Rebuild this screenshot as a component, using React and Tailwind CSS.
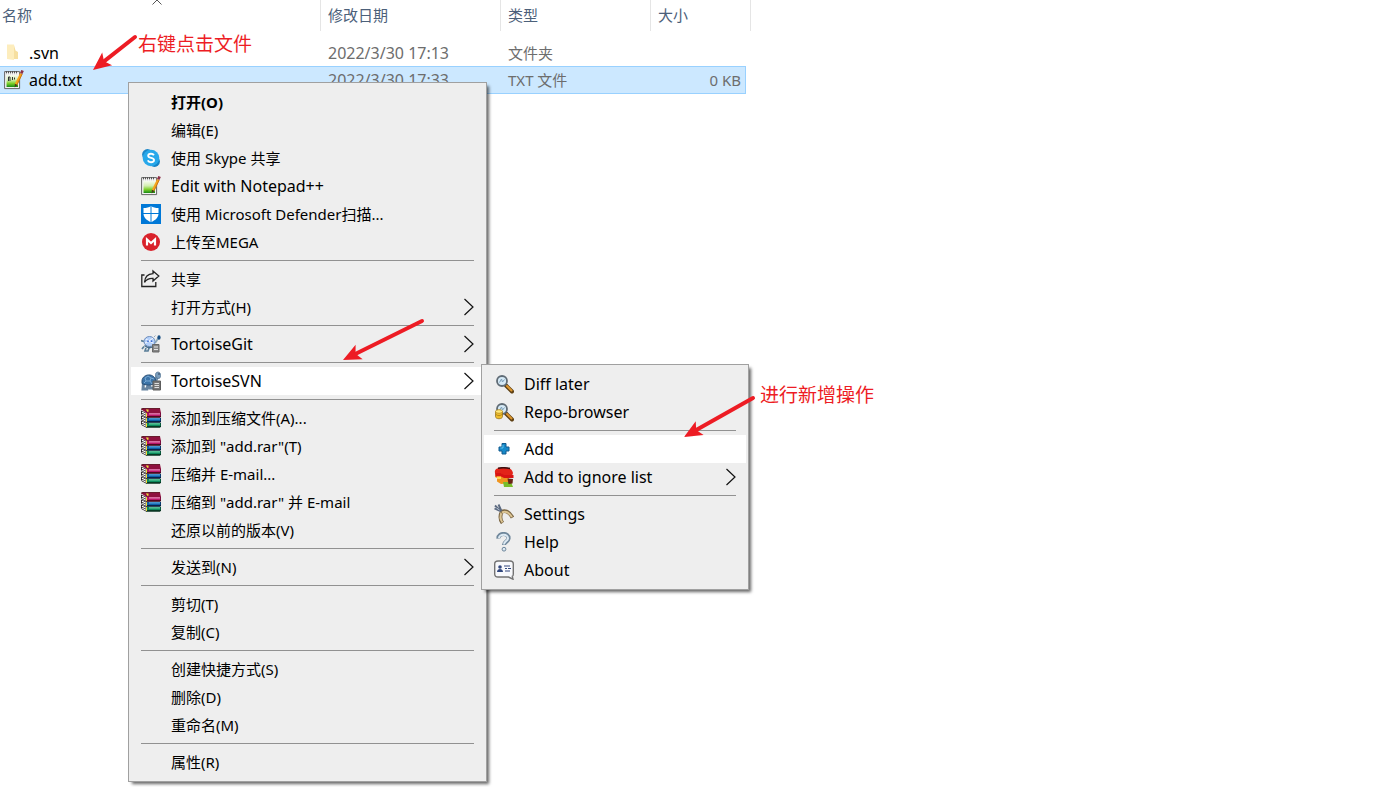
import clsx from "clsx";

const SkypeIcon = () => (
  <svg viewBox="0 0 20 20" className="size-5">
    <circle cx="6.5" cy="6.5" r="5.4" fill="#1c86c8" />
    <circle cx="13.5" cy="13.5" r="5.4" fill="#1583c6" />
    <circle cx="10" cy="10" r="8.3" fill="#28a8ea" />
    <path
      d="M12.9 7.2C12.3 6.1 11.2 5.7 10 5.7c-1.7 0-2.8.8-2.8 2 0 2.9 5.8 1.5 5.8 4.3 0 1.4-1.3 2.2-3 2.2-1.5 0-2.7-.6-3.2-1.8"
      fill="none"
      stroke="#fff"
      strokeWidth="1.9"
    />
  </svg>
);

const NotepadIcon = ({ marks }) => (
  <svg viewBox="0 0 20 20" className="size-5">
    <defs>
      <linearGradient id="npp" x1="0" y1="0" x2="0" y2="1">
        <stop offset="0" stopColor="#f6fbf0" />
        <stop offset="0.4" stopColor="#d3eeb0" />
        <stop offset="0.7" stopColor="#7fd02c" />
        <stop offset="1" stopColor="#168a16" />
      </linearGradient>
    </defs>
    <path d="M.6 1.600h15v17h-15z" fill="#f4f4f4" stroke="#666" />
    <path d="M2.500 5h11.500v12H2.500z" fill="url(#npp)" />
    <path d="M2 2h11" stroke="#555" strokeWidth="2" strokeDasharray="1 1" />
    <path d="M2 3.700h11" stroke="#aaa" strokeWidth="1" strokeDasharray="1 1" />
    {marks && <path d="M4.500 11V7h1.500v4M8.500 7v3M10.500 7.500v2" stroke="#333" fill="none" />}
    <path d="M17.200 3.500L12 14.500" stroke="#f5a51d" strokeWidth="2.600" />
    <path d="M18.200 4L13.200 14.500" stroke="#c56e12" strokeWidth="0.900" />
    <path d="M18.600 0.500L17.200 3.500" stroke="#8e3048" strokeWidth="2.700" />
    <path d="M10.900 13.800l2.600 1.200-2.800 2.600z" fill="#4c3a1c" />
  </svg>
);

const DefenderIcon = () => (
  <svg viewBox="0 0 20 20" className="size-5">
    <path d="M0 0h20v20H0z" fill="#0078d7" />
    <path d="M10 2c2 1.400 4.500 2 7.500 2v5.500c0 4-3.200 6.800-7.500 8.700-4.300-1.900-7.500-4.700-7.500-8.700V4c3 0 5.500-.6 7.500-2z" fill="#fff" />
    <path d="M10 1v18M2 9.500h16" stroke="#0078d7" strokeWidth="1" />
  </svg>
);

const MegaIcon = () => (
  <svg viewBox="0 0 20 20" className="size-5">
    <circle cx="10" cy="10" r="9" fill="#d9222b" />
    <path d="M6 13.500V7.500l4 3.500 4-3.500v6" fill="none" stroke="#fff" strokeWidth="2.200" />
  </svg>
);

const ShareIcon = () => (
  <svg viewBox="0 0 20 20" className="size-5" fill="none" stroke="#222" strokeWidth="1.300">
    <path d="M3.500 6H.8v11.500h14V13" />
    <path d="M12 2l5.800 5L12 12V9.300c-4-.2-6.500.8-8.500 4 .3-4.800 3.200-8.200 8.500-8.600z" />
  </svg>
);

const TortoiseGitIcon = () => (
  <svg viewBox="0 0 20 20" className="size-5">
    <path d="M0 6.500l3 1M3 12.500L1 15M5 14l-1 3h3l1-3" stroke="#5b7f99" strokeWidth="1.700" fill="none" />
    <path d="M13.500 9c2-.5 2-3 4-5" stroke="#8fa9b8" strokeWidth="1.800" fill="none" />
    <ellipse cx="8.500" cy="7.500" rx="5.500" ry="5" fill="#b4d0fa" stroke="#6c8cba" />
    <path d="M5 5l3 2 4-3M4 9l4-2 4 2" stroke="#f4f9ff" fill="none" />
    <circle cx="7" cy="7.200" r="0.900" fill="#3c6ad0" />
    <circle cx="10.500" cy="7.200" r="0.900" fill="#3c6ad0" />
    <path d="M3.500 11.500c3 2.500 7 2.500 10 0" stroke="#466c8c" strokeWidth="1.600" fill="none" />
    <path d="M13 3l1.500-1.500" stroke="#96aabb" />
    <ellipse cx="18" cy="3.500" rx="1.600" ry="2.200" fill="#174f83" />
    <path d="M11.500 10.500H18v7.500h-6.500z" fill="#858585" stroke="#666" />
    <path d="M13 13h4M13 15.500h4" stroke="#e4e4e4" />
  </svg>
);

const TortoiseSvnIcon = () => (
  <svg viewBox="0 0 20 20" className="size-5">
    <path d="M2.500 12l-.5 6h4l1-4M8 13l1 4h3" stroke="#6784a0" strokeWidth="3" fill="none" />
    <path d="M14 10c2-1 1-4 3-6" stroke="#6e8eac" strokeWidth="3.500" fill="none" />
    <path d="M1 10c0-4 4-6.500 8-6s6.500 4 5.500 8.500c-4 2-10 2-13.500 0z" fill="#3c74a8" stroke="#2b5077" />
    <path d="M4 7l3-2 3 2-1 3H5zM10 7l3 1M5 10l-2 2M9 10l2 3" stroke="#79a9d4" fill="none" />
    <path d="M14.500 3.500c0-3 4.500-3.500 5 0s-1 4-2.500 4-2.500-2-2.500-4z" fill="#7a9dbd" stroke="#4b6b89" strokeWidth="0.700" />
    <circle cx="18" cy="3" r="0.700" fill="#14293e" />
    <path d="M12 10h7.500v9H12z" fill="#777" stroke="#5c5c5c" />
    <path d="M13.500 12.500H18M13.500 14.500H18M13.500 16.500H18" stroke="#dedede" />
  </svg>
);

const Book = ({ y, dark, cover, shine }) => (
  <g transform={`translate(0 ${y})`}>
    <path d="M0 1.200l5.500 2.600v4.700L.8 6Q-.6 3.500 0 1.200z" fill="#1c1518" />
    <path d="M.9 2.300l4 1.900v1.200L.8 3.500zM.8 4.300l4.100 1.900v1.300L1.300 5.400z" fill="#fff" />
    <path d="M5 3.400h15v3.800l-1 1.300H5z" fill={dark} />
    <path d="M6 3.800h13.500v3H6z" fill={cover} />
    <path d="M8 4.600h11" stroke={shine} strokeWidth="1" />
    <path d="M5.500 3.800v4" stroke="#f0de39" strokeWidth="1" />
  </g>
);

const WinRarIcon = () => (
  <svg viewBox="0 0 20 20" className="size-5">
    <Book y={11.3} dark="#07301f" cover="#0a8a5c" shine="#7fe3b8" />
    <Book y={6.3} dark="#061d3d" cover="#0c5da8" shine="#6fc0ef" />
    <Book y={1.3} dark="#430618" cover="#b81468" shine="#f3a7cd" />
    <path d="M0 1.200L3 .2h16L20 5H5.500z" fill="#8e103f" />
    <path d="M0 1.200L3 .2h16" stroke="#4c0a12" fill="none" />
    <path d="M5 2h2.500M6 3.200h1.500" stroke="#f0de39" strokeWidth="1.200" />
  </svg>
);

const Magnifier = () => (
  <g>
    <path d="M12 11.500l6 6" stroke="#5d3f12" strokeWidth="4" strokeLinecap="round" />
    <path d="M13 12l4.500 4.500" stroke="#dc962e" strokeWidth="2" strokeLinecap="round" />
    <circle cx="8" cy="7" r="5" fill="#d5e9f6" stroke="#5f6b75" strokeWidth="1.800" />
    <path d="M5.500 8.500l2-3.500 1 3 2-2.500" stroke="#7c9fb8" fill="none" />
  </g>
);

const DiffIcon = () => (
  <svg viewBox="0 0 20 20" className="size-5">
    <Magnifier />
  </svg>
);

const RepoIcon = () => (
  <svg viewBox="0 0 20 20" className="size-5">
    <Magnifier />
    <path d="M1.500 9.500v5c0 3 7 3 7 0v-5z" fill="#efbd2b" stroke="#98731a" strokeWidth="0.800" />
    <ellipse cx="5" cy="9.500" rx="3.500" ry="1.800" fill="#ffe97b" stroke="#b78c20" strokeWidth="0.800" />
    <path d="M2 12.500c1.500 1.500 4.500 1.500 6 0" stroke="#b68a1b" fill="none" />
  </svg>
);

const AddIcon = () => (
  <svg viewBox="0 0 20 20" className="size-5">
    <path d="M8 4.500h4V8h3v4h-3v3H8v-3H5V8h3z" fill="#1689c9" stroke="#125b8e" strokeLinejoin="round" />
    <path d="M9 6v3H6.500" stroke="#5dc4ed" fill="none" />
  </svg>
);

const IgnoreIcon = () => (
  <svg viewBox="0 0 20 20" className="size-5">
    <path d="M2 6h13v8l-3 2.500-5 .5-4-2.500V11L1 10z" fill="#f0951f" />
    <path d="M9 15h8l2 5H10z" fill="#79bd2a" />
    <path d="M1 6C0 2 4 .5 9 .5S18 1 19 6l-1 3H9L7 6z" fill="#e32419" />
    <path d="M4 1.200q6-1 12 .3" stroke="#3d1010" strokeWidth="1.600" fill="none" />
    <path d="M1 6h6l3 2h9.500v3H10L7 9.500H1.500z" fill="#d81414" />
    <path d="M13.500 11.500l5.500.5-.5 4.500-4 .5z" fill="#6a2416" />
    <path d="M3 9.500h4v2.500H3z" fill="#ffd752" />
  </svg>
);

const SettingsIcon = () => (
  <svg viewBox="0 0 20 20" className="size-5" fill="none">
    <path d="M8 7c-2 4-2.500 8 .5 12" stroke="#7a6543" strokeWidth="3.800" />
    <path d="M8 7.500c-2 4-2 8 .5 10.800" stroke="#dcc594" strokeWidth="2" />
    <path d="M7 8c4-2 8-.5 11.500 5.500" stroke="#7a6543" strokeWidth="3.800" />
    <path d="M8 8.500c4-2 7 0 10 4.500" stroke="#dcc594" strokeWidth="2" />
    <path d="M1 1.500l6 6M4.500.5L7.500 7M.5 4.500L6 7" stroke="#5c6a80" strokeWidth="1.900" />
    <path d="M2.500 4l3 2" stroke="#b8c6d8" />
  </svg>
);

const HelpIcon = () => (
  <svg viewBox="0 0 20 20" className="size-5" fill="none">
    <path d="M4.500 6.500c-.5-6 10.500-6 10 0-.5 3.500-4.500 3-4.500 6.500" stroke="#6f879b" strokeWidth="4.200" />
    <path d="M5 6c0-4.500 9.500-4.500 9 .5-.5 3-4 2.500-4 6" stroke="#dce9f3" strokeWidth="2" />
    <circle cx="10" cy="17.200" r="1.900" fill="#dce9f3" stroke="#6f879b" />
  </svg>
);

const AboutIcon = () => (
  <svg viewBox="0 0 20 20" className="size-5">
    <path
      d="M4 1h12q3.300 0 3.300 3v10q0 2-1 2.300l.7 2.900L14.500 17H4q-3.300 0-3.300-3V4Q.7 1 4 1z"
      fill="#f8f9fc"
      stroke="#737373"
      strokeWidth="1.400"
    />
    <circle cx="6" cy="7" r="1.800" fill="#32487e" />
    <path d="M3 12c0-4 6-4 6 0z" fill="#32487e" />
    <path d="M10 6h6M11 8.500h2M14 8.500h3M11 11h5" stroke="#32487e" strokeWidth="1.200" />
  </svg>
);

const FolderIcon = () => (
  <svg viewBox="0 0 20 20" className="size-5">
    <path d="M8 2h2l1.500 5.500 2.500 1.500v7H8z" fill="#f6dfa0" />
    <path d="M3 1.500h7V17L3 16z" fill="#fdedbd" />
  </svg>
);

const Chevron = () => (
  <svg viewBox="0 0 10 18" className="ml-auto h-[18px] w-[10px]" fill="none">
    <path d="M.5 1l8.500 8-8.500 8" stroke="#111" strokeWidth="1.200" />
  </svg>
);

const svnMenu = [
  [
    { label: "Diff later", icon: <DiffIcon />, latin: true },
    { label: "Repo-browser", icon: <RepoIcon />, latin: true },
  ],
  [
    { label: "Add", icon: <AddIcon />, latin: true, active: true },
    { label: "Add to ignore list", icon: <IgnoreIcon />, latin: true, more: true },
  ],
  [
    { label: "Settings", icon: <SettingsIcon />, latin: true },
    { label: "Help", icon: <HelpIcon />, latin: true },
    { label: "About", icon: <AboutIcon />, latin: true },
  ],
];

const fileMenu = [
  [
    { label: "打开(O)", bold: true },
    { label: "编辑(E)" },
    { label: "使用 Skype 共享", icon: <SkypeIcon /> },
    { label: "Edit with Notepad++", icon: <NotepadIcon />, latin: true },
    { label: "使用 Microsoft Defender扫描...", icon: <DefenderIcon /> },
    { label: "上传至MEGA", icon: <MegaIcon /> },
  ],
  [
    { label: "共享", icon: <ShareIcon /> },
    { label: "打开方式(H)", more: true },
  ],
  [{ label: "TortoiseGit", icon: <TortoiseGitIcon />, latin: true, more: true }],
  [
    {
      label: "TortoiseSVN",
      icon: <TortoiseSvnIcon />,
      latin: true,
      more: true,
      active: true,
      submenu: svnMenu,
    },
  ],
  [
    { label: "添加到压缩文件(A)...", icon: <WinRarIcon /> },
    { label: '添加到 "add.rar"(T)', icon: <WinRarIcon /> },
    { label: "压缩并 E-mail...", icon: <WinRarIcon /> },
    { label: '压缩到 "add.rar" 并 E-mail', icon: <WinRarIcon /> },
    { label: "还原以前的版本(V)" },
  ],
  [{ label: "发送到(N)", more: true }],
  [{ label: "剪切(T)" }, { label: "复制(C)" }],
  [{ label: "创建快捷方式(S)" }, { label: "删除(D)" }, { label: "重命名(M)" }],
  [{ label: "属性(R)" }],
];

const Menu = ({ groups, className }) => (
  <div
    className={clsx(
      "absolute border border-[#a0a0a0] bg-[#eeeeee] px-0.5 py-[5px] shadow-[3px_3px_3px_-1px_rgba(0,0,0,0.6)]",
      className
    )}
  >
    {groups.map((group, index) => (
      <div key={index}>
        {index > 0 && <hr className="mx-2.5 my-1 border-[#919191]" />}
        <ul>
          {group.map((item) => (
            <li key={item.label} className="relative">
              <button
                type="button"
                className={clsx(
                  "flex h-7 w-full items-center gap-2.5 px-2.5 text-left",
                  item.active && "bg-white",
                  item.bold && "font-bold",
                  item.latin && "text-[16px]"
                )}
              >
                <span className="size-5 shrink-0">{item.icon}</span>
                <span className="whitespace-nowrap leading-5">{item.label}</span>
                {item.more && <Chevron />}
              </button>
              {item.submenu && (
                <Menu groups={item.submenu} className="-top-[3px] left-full z-10 -ml-[3px] w-[268px]" />
              )}
            </li>
          ))}
        </ul>
      </div>
    ))}
  </div>
);

// Arrow head sits at (x, y), the tail at (fromX, fromY)
const Arrow = ({ x, y, fromX, fromY }) => {
  const length = Math.hypot(fromX - x, fromY - y);
  const angle = (Math.atan2(fromY - y, fromX - x) * 180) / Math.PI;
  return (
    <g transform={`translate(${x} ${y}) rotate(${angle})`} fill="#ed1c24">
      <path d="M0 0L18 -8L14 0L18 8z" />
      <path d={`M12 0H${length}`} stroke="#ed1c24" strokeWidth="4" strokeLinecap="round" />
    </g>
  );
};

const App = () => {
  return (
    <div className="relative min-h-screen overflow-hidden bg-white font-['Noto_Sans','Noto_Sans_CJK_SC',sans-serif] text-[15px] leading-5 text-black">
      {/* File list */}
      <table className="table-fixed border-separate border-spacing-0 whitespace-nowrap text-left text-[#6d6d6d]">
        <colgroup>
          <col className="w-[321px]" />
          <col className="w-[180px]" />
          <col className="w-[150px]" />
          <col className="w-[95px]" />
          <col className="w-[5px]" />
        </colgroup>
        <thead className="text-[#4c607a]">
          <tr className="h-[31px]">
            <th className="relative border-r border-[#e5e5e5] pb-0.5 pl-0.5 font-normal">
              名称
              <svg viewBox="0 0 10 5" className="absolute top-0 left-[152px] h-[5px] w-[10px]" fill="none">
                <path d="M.5 4.500L5 0l4.500 4.500" stroke="#555" />
              </svg>
            </th>
            <th className="border-r border-[#e5e5e5] pb-0.5 pl-[7px] font-normal">修改日期</th>
            <th className="border-r border-[#e5e5e5] pb-0.5 pl-[7px] font-normal">类型</th>
            <th colSpan={2} className="border-r border-[#e5e5e5] pb-0.5 pl-[7px] font-normal">
              大小
            </th>
          </tr>
        </thead>
        <tbody>
          <tr className="h-[9px]">
            <td colSpan={5} />
          </tr>
          <tr className="h-[26px]">
            <td className="text-[16px] leading-5 text-black">
              <div className="flex items-center gap-[5px] pl-1">
                <FolderIcon />
                .svn
              </div>
            </td>
            <td className="pl-[7px] text-[16px] leading-5">2022/3/30 17:13</td>
            <td className="pl-[7px]">文件夹</td>
            <td />
            <td />
          </tr>
          <tr className="h-7">
            <td className="border-y border-[#99d1ff] bg-[#cce8ff] text-[16px] leading-5 text-black">
              <div className="flex items-center gap-[5px] pl-1">
                <NotepadIcon marks />
                add.txt
              </div>
            </td>
            <td className="border-y border-[#99d1ff] bg-[#cce8ff] pl-[7px] text-[16px] leading-5">
              2022/3/30 17:33
            </td>
            <td className="border-y border-[#99d1ff] bg-[#cce8ff] pl-[7px]">TXT 文件</td>
            <td className="border-y border-r border-[#99d1ff] bg-[#cce8ff] pr-1 text-right">0 KB</td>
            <td />
          </tr>
        </tbody>
      </table>

      <Menu groups={fileMenu} className="top-[82px] left-32 w-[359px]" />

      {/* Annotations */}
      <svg className="pointer-events-none absolute inset-0 z-20 size-full">
        <Arrow x={93} y={70} fromX={135} fromY={37} />
        <Arrow x={343} y={360} fromX={422} fromY={321} />
        <Arrow x={684} y={437} fromX={753} fromY={398} />
      </svg>
      <p className="absolute top-8 left-[138px] text-[19px] leading-6 text-[#ed1c24]">右键点击文件</p>
      <p className="absolute top-[383px] left-[760px] text-[19px] leading-6 text-[#ed1c24]">进行新增操作</p>
    </div>
  );
};

export default App;
